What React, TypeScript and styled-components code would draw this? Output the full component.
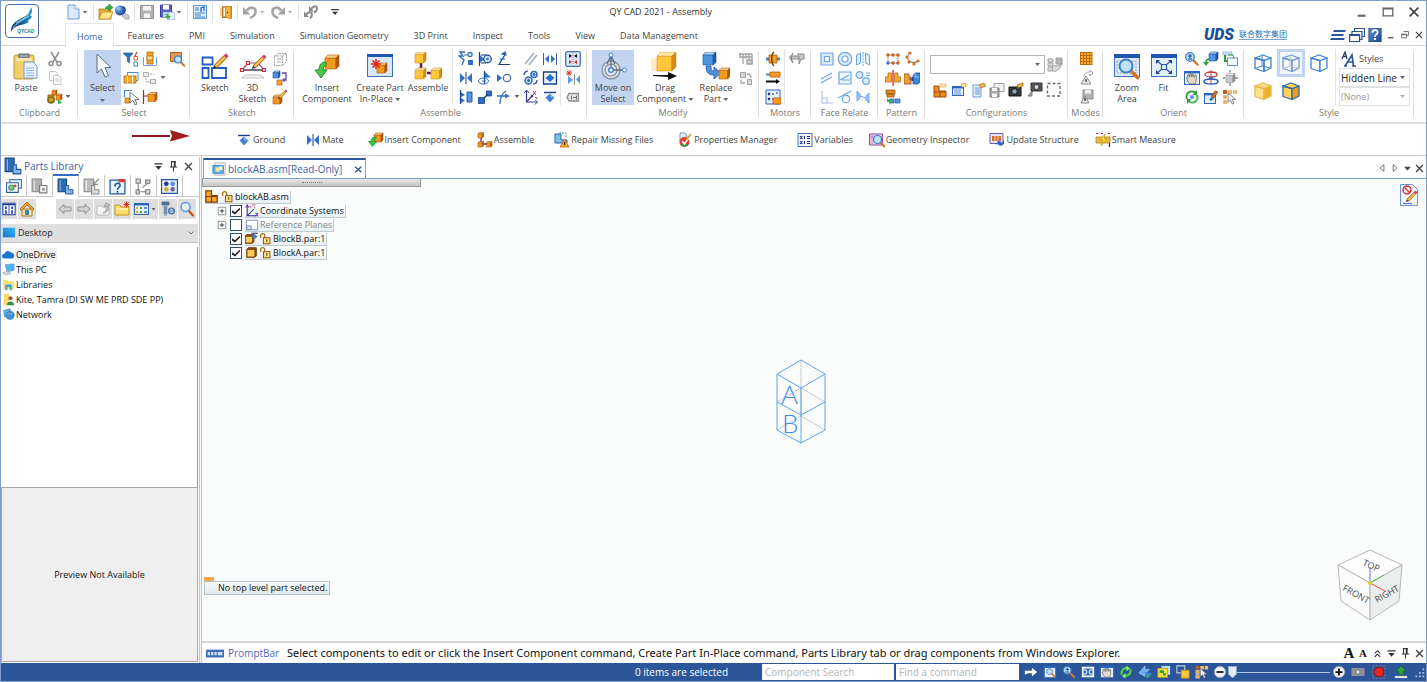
import React from 'react';
import styled, { createGlobalStyle, css } from 'styled-components';

const c = {
  blue: '#2b579a',
  mid: '#2f6fc4',
  line: '#d4d4d4',
  text: '#444444',
  soft: '#7a7a7a',
  edge: '#7f9ccc',
  pick: '#c3d4f0',
};

const Global = createGlobalStyle`
  * { box-sizing: border-box; }
  body { margin: 0; background: #fff; }
  body, button, input, select { font-family: 'Open Sans', 'Noto Sans CJK SC', sans-serif; font-size: 9px; line-height: 12px; color: ${c.text}; }
  button { border: 0; padding: 0; background: none; cursor: pointer; }
  svg { display: block; flex: none; }
  ul { list-style: none; margin: 0; padding: 0; }
`;

/* ---------- drawing helpers ---------- */

type Tone = 'o' | 'b' | 'y' | 'g' | 'l';
const tones: Record<Tone, [string, string, string]> = {
  o: ['#f39a1e', '#fcd27c', '#b0560c'],
  b: ['#4f94e4', '#b4d6fa', '#1c559f'],
  y: ['#ffc83c', '#ffe9a6', '#d58a12'],
  g: ['#c9c9c9', '#eeeeee', '#8c8c8c'],
  l: ['#d9e9fb', '#f4f9ff', '#86b2e6'],
};

const Blk = ({ x, y, s, k = 'o' }: { x: number; y: number; s: number; k?: Tone }) => {
  const d = s * 0.22;
  const f = s - d;
  const [front, top, side] = tones[k];
  return (
    <g stroke={side} strokeWidth={0.6} strokeLinejoin="round">
      <path d={`M${x} ${y + d}h${f}v${f}h${-f}z`} fill={front} />
      <path d={`M${x} ${y + d}l${d} ${-d}h${f}l${-d} ${d}z`} fill={top} />
      <path d={`M${x + f} ${y + d}l${d} ${-d}v${f}l${-d} ${d}z`} fill={side} />
    </g>
  );
};

const Mag = ({ x, y, r }: { x: number; y: number; r: number }) => (
  <g>
    <path d={`M${x + r * 0.8} ${y + r * 0.8}l${r} ${r}`} stroke="#d0762a" strokeWidth={r * 0.55} strokeLinecap="round" />
    <circle cx={x} cy={y} r={r} fill="#bfe2fb" stroke="#3b7fc6" strokeWidth={r * 0.3} />
  </g>
);

const Pencil = ({ x, y, l }: { x: number; y: number; l: number }) => (
  <g strokeLinecap="butt">
    <path d={`M${x + l * 0.15} ${y - l * 0.15}L${x + l * 0.8} ${y - l * 0.8}`} stroke="#8a5a10" strokeWidth={l * 0.28} />
    <path d={`M${x + l * 0.15} ${y - l * 0.15}L${x + l * 0.8} ${y - l * 0.8}`} stroke="#f5c04a" strokeWidth={l * 0.18} />
    <path d={`M${x + l * 0.8} ${y - l * 0.8}L${x + l * 0.95} ${y - l * 0.95}`} stroke="#d6357f" strokeWidth={l * 0.26} />
    <path d={`M${x} ${y}l${l * 0.08} ${-l * 0.25} ${l * 0.17} ${l * 0.17}z`} fill="#333" />
  </g>
);

const Win = ({ x = 1, y = 2, w = 14, h = 12 }: { x?: number; y?: number; w?: number; h?: number }) => (
  <g>
    <rect x={x + 0.5} y={y + 0.5} width={w - 1} height={h - 1} fill="#e6f0fc" stroke="#2f66b8" />
    <rect x={x} y={y} width={w} height={2.4} fill="#2a66c0" />
  </g>
);

const Burst = ({ x, y, r }: { x: number; y: number; r: number }) => (
  <path
    d={`M${x - r} ${y}h${2 * r}M${x} ${y - r}v${2 * r}M${x - r * 0.7} ${y - r * 0.7}l${r * 1.4} ${r * 1.4}M${x + r * 0.7} ${y - r * 0.7}l${-r * 1.4} ${r * 1.4}`}
    stroke="#e02a1c"
    strokeWidth={r * 0.32}
  />
);

const Arrow = ({ fill = '#f6f9fd', stroke = '#4b5560' }: { fill?: string; stroke?: string }) => (
  <path d="M0 0v11l3-2.6 2 4.6 2-1-2-4.400h4z" fill={fill} stroke={stroke} strokeWidth={0.8} />
);

/* ---------- 16 x 16 icons ---------- */

const icons: Record<string, React.ReactNode> = {
  newDoc: (
    <g>
      <path d="M3 1h7l4 4v10H3z" fill="#dbeafb" stroke="#6f9bd4" />
      <path d="M10 1v4h4" fill="#fff" stroke="#6f9bd4" strokeWidth={0.8} />
    </g>
  ),
  open: (
    <g>
      <path d="M1 5h5l1 1h6v9H1z" fill="#e8b73a" stroke="#a87a14" strokeWidth={0.8} />
      <path d="M1 15l3-7h11l-3 7z" fill="#ffe48c" stroke="#b98b1c" strokeWidth={0.8} />
      <path d="M7 5c1-3 3-3 4-3V0l4 3.500L11 7V5c-1 0-3 0-4 0z" fill="#35b045" stroke="#1d7a2c" strokeWidth={0.6} />
    </g>
  ),
  sphere: (
    <g>
      <circle cx={6} cy={6.5} r={5} fill="url(#ball)" />
      <path d="M8 3c4 0 4 5 1 6" fill="none" stroke="#1c4f96" strokeWidth={1.5} />
      <path d="M8 12l3-3 4 3v3h-4z" fill="#c8ccd4" stroke="#868c98" strokeWidth={0.7} />
    </g>
  ),
  saveGrey: (
    <g>
      <path d="M1.500 1.500h13v13h-13z" fill="#b4b4b4" stroke="#929292" />
      <path d="M4 2h8v4.500H4zM5 9.500h6V14H5z" fill="#f4f4f4" />
    </g>
  ),
  saveAll: (
    <g>
      <path d="M1.500 1h11v12h-11z" fill="#5a5fc0" stroke="#3a3f9c" />
      <path d="M4 1h6v4.500H4z" fill="#fff" />
      <path d="M4 8h6v5H4z" fill="#cfd4f4" />
      <path d="M9 8h5l2 2v6H9z" fill="#eaf2fc" stroke="#6c94cc" strokeWidth={0.7} />
      <path d="M5 10c4 0 5 0 5 2h2l-3 3.500L6 12h2c0-1-2-1-3-2z" fill="#35b045" />
    </g>
  ),
  sheet: (
    <g>
      <path d="M1.500 1.500h13v13h-13z" fill="#e4effc" stroke="#5e94d8" />
      <path d="M3 4h4M3 6h4M3 9h10M3 11h6M3 13h10" stroke="#3f7fce" />
      <path d="M9 8V4l3-1v4" fill="none" stroke="#2a66c0" strokeWidth={1.3} />
    </g>
  ),
  door: (
    <g>
      <path d="M5 2h9v11H5z" fill="#fff" stroke="#b0731a" strokeWidth={1.5} />
      <path d="M8 1.500l6 0V15L8 13z" fill="#f4b73c" stroke="#b0731a" strokeWidth={0.7} />
      <path d="M2 3h2v9H2z" fill="#e2cba8" />
      <circle cx={10} cy={8} r={0.8} fill="#6b4508" />
    </g>
  ),
  undo: (
    <g>
      <path d="M5 6.500C8 2 14 3 13.500 8c0 3-3 5-5.500 6" fill="none" stroke="#a4a4a4" strokeWidth={2.600} />
      <path d="M1 3v7.500h7.500z" fill="#a4a4a4" />
    </g>
  ),
  redo: (
    <g>
      <path d="M11 6.500C8 2 2 3 2.500 8c0 3 3 5 5.500 6" fill="none" stroke="#a4a4a4" strokeWidth={2.600} />
      <path d="M15 3v7.500H7.500z" fill="#a4a4a4" />
    </g>
  ),
  relink: (
    <g fill="none" stroke="#8c8c8c" strokeWidth={2}>
      <path d="M8 6c1-4 6-5 6-1.500 0 2-1 3-3 4" />
      <path d="M3 11c1-3 6-4 6-.500 0 2-1 3-2 4" />
      <path d="M6 2v5.500h5zM1 7.500V13h5z" fill="#8c8c8c" stroke="none" />
    </g>
  ),
  cut: (
    <g fill="none" stroke="#8e8e8e" strokeWidth={1.5}>
      <path d="M4 1l6 10M12 1L6 11" />
      <circle cx={4} cy={12.500} r={2} />
      <circle cx={12} cy={12.500} r={2} />
    </g>
  ),
  copy: (
    <g fill="#fbfbfb" stroke="#c3c3c3">
      <path d="M2.500 1.500h6l2 2v7h-8z" />
      <path d="M6.500 5.500h5l2.500 2.500v6.500H6.500zM8 9h4M8 11h4" />
    </g>
  ),
  truck: (
    <g>
      <Blk x={5} y={1} s={5} />
      <Blk x={9} y={5} s={6} />
      <path d="M1 6h6v7H1z" fill="#d9a21e" stroke="#7a4b0c" strokeWidth={0.8} />
      <circle cx={4} cy={11} r={3} fill="none" stroke="#7d6b1c" strokeWidth={1.5} />
      <path d="M11 10l4 4-4 1z" fill="#35b045" />
    </g>
  ),
  filter: (
    <g>
      <path d="M0 2h10L6.500 6.500V12l-2-1.500V6.500z" fill="#2f6fc4" stroke="#1d4f98" strokeWidth={0.6} />
      <path d="M14 1l-2 4" stroke="#d83a2a" strokeWidth={1.2} />
      <path d="M11 5.500h3.500v3.500H11z" fill="#fff" stroke="#e0602a" />
      <path d="M11 11h3.500v4H11z" fill="#fff" stroke="#2f8fd4" />
    </g>
  ),
  selBox: (
    <g>
      <path d="M1.500 6v8.500h13V6" fill="none" stroke="#6fa0e0" />
      <path d="M5 1h6v12H5z" fill="#f6a52c" stroke="#b0660e" strokeWidth={0.8} />
      <path d="M5 5h6v4H5z" fill="#ffe08a" stroke="#b0660e" strokeWidth={0.8} />
    </g>
  ),
  findPart: (
    <g>
      <path d="M1.500 1.500h11v9h-11z" fill="#dc9a5c" stroke="#a8612a" />
      <Mag x={9} y={8.500} r={3.500} />
    </g>
  ),
  selRect: (
    <g>
      <path d="M4 2.500h11v8h-2M4.500 2.500V6" fill="none" stroke="#4a8ee0" />
      <path d="M1 6h12v7H1z" fill="#f7a830" stroke="#a85c0c" strokeWidth={0.8} />
      <path d="M4.500 6v7M9.500 6v7" stroke="#fff3c8" />
    </g>
  ),
  selGrey: (
    <g fill="#ececec" stroke="#ababab">
      <path d="M1.500 2.500h5v4h-5zM8.500 9.500h5v4h-5z" />
      <path d="M4 8v4h4M8 4h4" strokeDasharray="2 1" />
    </g>
  ),
  selCursor: (
    <g>
      <path d="M1.500 8V1.500H9" fill="none" stroke="#3f86dc" strokeWidth={1.2} />
      <path d="M2 9h5v5H2z" fill="#f7a830" stroke="#a85c0c" strokeWidth={0.7} />
      <g transform="translate(7 3)"><Arrow /></g>
    </g>
  ),
  selSide: (
    <g>
      <path d="M1.500 1v14M2 7h5" stroke="#b0212a" strokeWidth={1.2} />
      <Blk x={6} y={3.500} s={9} />
    </g>
  ),
  refPlane: (
    <g fill="none" stroke="#a4a4a4">
      <path d="M2.500 5l4-2.500h8v8l-4 4h-8zM2.500 5h8l4-2.500M10.500 5v9" strokeDasharray="2 0.600" />
      <path d="M5 8h4M5 11h4" />
    </g>
  ),
  copySketch: (
    <g>
      <Blk x={1} y={1} s={7} k="b" />
      <path d="M10 3h4v7h-3" fill="none" stroke="#6a3f9c" strokeWidth={1.3} />
      <path d="M12.500 7.500L10 10l2.500 2.500z" fill="#6a3f9c" />
      <path d="M5 10h5v5H5z" fill="#f7a830" stroke="#a85c0c" strokeWidth={0.7} />
    </g>
  ),
  editPart: (
    <g>
      <Blk x={1} y={6} s={9} />
      <Pencil x={6} y={10} l={9} />
    </g>
  ),
  flash: (
    <g>
      <path d="M7 1H2l3 4H1l5 4-2 5" fill="none" stroke="#2f6fc4" strokeWidth={1.3} />
      <circle cx={12} cy={3.500} r={2.200} fill="#cfe2fa" stroke="#2f6fc4" strokeWidth={1.2} />
      <path d="M10 9h5v5h-5z" fill="#2f6fc4" />
      <path d="M6 4h3" stroke="#2f6fc4" />
    </g>
  ),
  mate: (
    <g fill="#2f6fc4">
      <path d="M2 3l5 5-5 5zM14 3L9 8l5 5z" />
      <path d="M7.500 2h1v12h-1z" fill="#15418a" />
    </g>
  ),
  mateSoft: (
    <g fill="#5b98e2">
      <path d="M3 6l5 4-5 4zM15 5l-4 4.500 4 4.500z" />
      <path d="M9 4h1v11H9z" fill="#888" />
      <Burst x={4} y={3} r={3} />
    </g>
  ),
  planar: (
    <g>
      <path d="M2.500 1v14" stroke="#15418a" strokeWidth={1.2} />
      <path d="M3 3l4 3-4 2zM3 9l4 2.500L3 14z" fill="#2f6fc4" />
      <path d="M9 3h5v10H9z" fill="#5b98e2" stroke="#15418a" strokeWidth={0.8} />
    </g>
  ),
  axial: (
    <g>
      <path d="M2.500 1v14M4 4h5M4 12h5" stroke="#15418a" strokeWidth={1.2} />
      <path d="M3 4l4 4-4 4z" fill="#2f6fc4" />
      <circle cx={10.500} cy={8} r={3.800} fill="#cfe2fa" stroke="#15418a" strokeWidth={1.2} />
      <circle cx={10.500} cy={8} r={1.300} fill="#2f6fc4" />
    </g>
  ),
  insertRel: (
    <g>
      <path d="M7.500 1v13" stroke="#15418a" strokeWidth={1.2} />
      <path d="M8 2l6 5.500H8z" fill="#2f6fc4" />
      <ellipse cx={6.500} cy={11} rx={5} ry={3} fill="none" stroke="#2f6fc4" />
      <path d="M5 11h4" stroke="#2f6fc4" />
    </g>
  ),
  connect: (
    <g fill="#2f6fc4" stroke="#15418a" strokeWidth={0.8}>
      <path d="M1.500 8.500h6v6h-6zM9.500 2h5v5h-5z" />
      <path d="M7 9l4-4" strokeWidth={1.5} />
    </g>
  ),
  angle: (
    <g fill="none" stroke="#2f6fc4" strokeWidth={1.2}>
      <path d="M14 13.500H3L10 2" stroke="#15418a" />
      <path d="M9 1L6 3l4 1z" fill="#15418a" />
      <path d="M4 8h5" />
    </g>
  ),
  tangent: (
    <g>
      <path d="M1 4l5 4-5 4z" fill="#2f6fc4" />
      <circle cx={11} cy={8} r={3.700} fill="#fff" stroke="#4a6fae" strokeWidth={1.2} />
    </g>
  ),
  path: (
    <g fill="none" stroke="#2f6fc4" strokeWidth={1.3}>
      <path d="M1 7h11M4 15c0-6 1-10 6-13" />
      <path d="M14 7L9 4.500v5z" fill="#2f6fc4" stroke="none" />
    </g>
  ),
  parallel: <path d="M2 13L11 2M6 14L14 4" stroke="#9aa9c4" strokeWidth={1.3} />,
  gears: (
    <g fill="#dce9fb" stroke="#2f6fc4">
      <circle cx={5.500} cy={10.500} r={3.500} strokeWidth={1.600} />
      <circle cx={5.500} cy={10.500} r={1.200} fill="#2f6fc4" />
      <circle cx={11} cy={4.500} r={3} strokeWidth={1.600} />
      <circle cx={11} cy={4.500} r={1} fill="#2f6fc4" />
      <path d="M10 14c3 0 4-2 4-4M1 5c0-2 2-4 4-4" strokeWidth={1.2} stroke="#15418a" fill="none" />
    </g>
  ),
  coord: (
    <g fill="none" stroke="#3a3a9c">
      <path d="M3.500 2v11H14M3.500 13L9 7" strokeWidth={1.2} />
      <path d="M1 4l2.500-3L6 4M12 10.500l2.500 2.500-2.500 2.500" />
      <path d="M10 2l3 4M13 2l-3 4M12 8l3 2" stroke="#a8327c" />
      <circle cx={9} cy={7} r={1} fill="#3a3a9c" />
    </g>
  ),
  center: (
    <g fill="#2f6fc4">
      <path d="M7 4v8L3 8zM9 4v8l4-4z" />
      <path d="M1 2h1v12H1zM14 2h1v12h-1z" fill="#4a5a9c" />
    </g>
  ),
  rigid: (
    <g>
      <path d="M1.500 2h13v12h-13z" fill="#eef4fd" stroke="#15418a" strokeWidth={1.3} />
      <path d="M8 4l4.500 4L8 12 3.500 8z" fill="#2f6fc4" />
    </g>
  ),
  ground: (
    <g>
      <path d="M2 3.500h12" stroke="#15418a" strokeWidth={1.4} />
      <path d="M8 4.500l4.500 4L8 13.500l-4.500-5z" fill="#3f7fdc" />
      <path d="M8 5l4 3.500H8z" fill="#86b4f2" />
    </g>
  ),
  toggle: (
    <g>
      <rect x={0.700} y={0.700} width={14.600} height={14.600} rx={1.500} fill="#dce9fb" stroke="#3f72c0" strokeWidth={1.3} />
      <path d="M4 3l3 2-3 2zM12 3L9 5l3 2z" fill="#111" />
      <path d="M4 9l3 2-3 2zM12 9l-3 2 3 2z" fill="#e0281c" />
      <path d="M8 2v12" stroke="#c84a4a" strokeWidth={0.8} strokeDasharray="1 1" />
    </g>
  ),
  capsule: (
    <g fill="none" stroke="#8c8c8c" strokeWidth={1.3}>
      <path d="M4 4.500h9.500v7.500H4l-2-3.500z" fill="#e4e4e4" />
      <path d="M6.500 6.500v4M8 8.500h3M11.500 6.500v4" stroke="#6c6c6c" strokeWidth={1} />
    </g>
  ),
  moveGrey: (
    <g fill="none" stroke="#a2a2a2" strokeWidth={1.3}>
      <path d="M1 3h13M2 6h12M5 3v10M8 3v5M11 3v10M2 3v4M14 3v10" />
      <path d="M9 9h5v4H9z" fill="#d0d0d0" />
    </g>
  ),
  replaceGrey: (
    <g fill="#d8d8d8" stroke="#a2a2a2">
      <path d="M2.500 2.500h5v5h-5zM9.500 9.500h4v5h-4z" />
      <path d="M9 4c3 0 4 1 4 4M3 10v3h4" fill="none" strokeWidth={1.3} />
    </g>
  ),
  motorRot: (
    <g>
      <path d="M1 6.500h14v3H1z" fill="#4f82c4" />
      <path d="M4 4h8v8H4z" fill="#f59d22" stroke="#a85c0c" strokeWidth={0.8} />
      <path d="M9 1C6 3 6 13 9 15" fill="none" stroke="#6a3c10" strokeWidth={1.4} />
    </g>
  ),
  motorLin: (
    <g>
      <path d="M1 3.500h5v2H1z" fill="#4f82c4" />
      <path d="M5 2h10v5H5z" fill="#f59d22" stroke="#a85c0c" strokeWidth={0.8} />
      <path d="M1 10.500h10V9l4 2.500-4 2.500v-1.500H1z" fill="#111" />
    </g>
  ),
  motorVar: (
    <g>
      <path d="M1 1h14v14H1z" fill="#e6effc" stroke="#2f66b8" />
      <path d="M3 4l2 2M5 4L3 6M7 5h2M11 4h2M3 9l2 2M5 9l-2 2M7 10h1" stroke="#1c2c6c" strokeWidth={1.2} />
      <path d="M8 9h8v6H8z" fill="#f59d22" stroke="#a85c0c" strokeWidth={0.8} />
    </g>
  ),
  motorSim: (
    <g fill="#c9c9c9" stroke="#888">
      <path d="M1 5h9v3H1zM8 3h7v5h-3l-2 5V8" />
      <path d="M4 2c-2 3-2 7 0 10" fill="none" strokeWidth={1.3} />
    </g>
  ),
  concentricSq: (
    <g fill="#dcecfd" stroke="#6ea6e8" strokeWidth={1.2}>
      <path d="M2 2h12v12H2z" />
      <path d="M5.500 5.500h5v5h-5z" fill="#fff" />
    </g>
  ),
  concentric: (
    <g fill="#dcecfd" stroke="#6ea6e8" strokeWidth={1.2}>
      <circle cx={8} cy={8} r={6.700} />
      <circle cx={8} cy={8} r={3} fill="#fff" />
    </g>
  ),
  symmetric: (
    <g fill="#dcecfd" stroke="#6ea6e8">
      <path d="M1.500 4l4-2v10l-4 2zM14.500 4l-4-2v10l4 2z" />
      <path d="M8 1v14" strokeDasharray="2 1" />
    </g>
  ),
  parallelSoft: <path d="M2 9l11-6M2 13l11-6" stroke="#6ea6e8" strokeWidth={1.3} />,
  offset: (
    <g fill="none" stroke="#6ea6e8" strokeWidth={1.2}>
      <path d="M2 2h12v12H2z" fill="#eef6fe" />
      <path d="M3 10l9-5M5 10h8" />
    </g>
  ),
  equal: (
    <g fill="#dcecfd" stroke="#6ea6e8" strokeWidth={1.2}>
      <circle cx={4.500} cy={5} r={3.300} />
      <circle cx={11} cy={11} r={3.300} />
      <path d="M11 3h4M11 5.500h4" />
    </g>
  ),
  perpend: <path d="M3 2v12h11M3 9h5v5" fill="none" stroke="#a9c4e6" strokeWidth={1.2} />,
  tangentSoft: (
    <g fill="none" stroke="#6ea6e8" strokeWidth={1.2}>
      <circle cx={9} cy={10} r={3.700} />
      <path d="M1 9l13-7" />
    </g>
  ),
  mirrorSoft: (
    <g fill="#9cc6f2" stroke="#6ea6e8">
      <path d="M2 2v10l3-3V5zM14 4v10l-3-3V7z" />
      <path d="M5 7l6 2" />
    </g>
  ),
  rectPattern: (
    <g>
      <path d="M3 4h10M3 12h10M3 4v8M13 4v8" stroke="#8c5a3c" strokeDasharray="1.500 1" />
      {[3, 8, 13].map((x) => <circle key={x} cx={x} cy={4} r={1.700} fill="#c4601c" />)}
      {[3, 8, 13].map((x) => <circle key={x} cx={x} cy={12} r={1.700} fill={x === 3 ? '#3f6fc4' : '#c4601c'} />)}
    </g>
  ),
  curvePattern: (
    <g>
      <path d="M6 2C1 6 4 13 13 11" fill="none" stroke="#8c5a3c" />
      {[[6, 2], [3, 6], [5, 11], [10, 13], [14, 10]].map(([x, y]) => <circle key={x} cx={x} cy={y} r={1.600} fill="#d0701c" />)}
    </g>
  ),
  mirror: (
    <g>
      <path d="M0 12V7h3V3h3.500v9zM16 12V7h-3V3H9.500v9z" fill="#f5a83a" stroke="#b0600e" strokeWidth={0.7} />
      <path d="M8 0v16" stroke="#e02a1c" strokeWidth={1.3} />
    </g>
  ),
  clonePart: (
    <g>
      <path d="M0 4h5v3h2v7H0z" fill="#f0a03a" stroke="#8c4a0c" strokeWidth={0.8} />
      <path d="M5 9h4M8 7l2 2-2 2z" fill="#3a3a6c" stroke="#3a3a6c" strokeWidth={0.8} />
      <path d="M9 6l2-3h5v9l-2 2H9z" fill="#3f86dc" stroke="#1c4f96" strokeWidth={0.8} />
      <path d="M11 3v4h4" stroke="#a8d0f8" strokeWidth={0.8} fill="none" />
    </g>
  ),
  duplicate: (
    <g>
      <path d="M1 1h9v4H1zM2 5h7v3H2z" fill="#e08a22" stroke="#8c4a0c" strokeWidth={0.7} />
      <path d="M5 10h4v4H5zM10 10h5v4h-5z" fill="#5b98e2" stroke="#1c559f" strokeWidth={0.7} />
      <path d="M2 9v4h2v2l3-3-3-2.500V11" fill="#35b045" />
    </g>
  ),
  cfgPart: (
    <g>
      <path d="M2 4h5v5h7v6H2z" fill="#f08a1c" stroke="#9c4a0c" />
      <path d="M2 10h12M8 10v5" stroke="#9c4a0c" />
      <path d="M8 2h6v3H8z" fill="#ffe9a8" stroke="#c8a04a" strokeWidth={0.6} />
    </g>
  ),
  cfgList: (
    <g>
      <Win x={1} y={4} w={12} h={10} />
      <path d="M3 8h7M3 10h7M3 12h7" stroke="#5b98e2" />
      <path d="M10 2l5-1v4l-4 0z" fill="#ffe08a" stroke="#c89a3c" strokeWidth={0.6} />
    </g>
  ),
  cfgDoc: (
    <g>
      <path d="M3 3h8v12H3z" fill="#e8f2fd" stroke="#6c9cd8" />
      <path d="M5 6h5M5 8h5M5 10h5M5 12h5" stroke="#5b98e2" />
      <path d="M9 3l5-2 2 3-5 2z" fill="#f0b44a" stroke="#a86c1c" strokeWidth={0.7} />
    </g>
  ),
  cfgSave: (
    <g>
      <path d="M5 1.500h10v8H5z" fill="#f4f4f4" stroke="#a0a0a0" />
      <path d="M1 6h9v9H1z" fill="#a8a8a8" stroke="#7c7c7c" />
      <path d="M3 6h5v3H3zM3 11.500h5V15H3z" fill="#f4f4f4" />
    </g>
  ),
  camera: (
    <g>
      <path d="M1 5h12v9H1z" fill="#3a3a3a" stroke="#111" />
      <circle cx={6.500} cy={9.500} r={2.800} fill="#8fa4b8" stroke="#111" />
      <path d="M9 3l6-2v3l-5 2z" fill="#f0b44a" stroke="#9c5c1c" strokeWidth={0.7} />
    </g>
  ),
  cameraGrey: (
    <g>
      <path d="M4 1h11v8H4z" fill="#585858" stroke="#333" />
      <circle cx={9.500} cy={5} r={2.500} fill="#d8d8d8" stroke="#333" />
      <path d="M5 9l-4 5h4z" fill="#a8a8a8" stroke="#777" />
    </g>
  ),
  dashed: <path d="M1.500 1.500h12.500v12.500h-12.500z" fill="none" stroke="#6c6c6c" strokeWidth={1.3} strokeDasharray="3 2" />,
  cfgApply: (
    <g fill="#dcdcdc" stroke="#a0a0a0">
      <path d="M1 2h5v3H1zM1 6h5v3H1zM1 10h5v4H1z" />
      <path d="M9 1h6v6H9z" fill="#b4b4b4" />
      <path d="M6 9h4l5-2-3 5-4 3-3-3z" />
    </g>
  ),
  gridMode: (
    <g>
      <path d="M2 1h12v13H2z" fill="#ffb22c" />
      <path d="M2 1.500h12M2 4.500h12M2 7.500h12M2 10.500h12M2 13.500h12M2.500 1v13M5.500 1v13M8.500 1v13M11.500 1v13M14 1v13" stroke="#b4640c" strokeWidth={0.9} />
    </g>
  ),
  warnArrow: (
    <g>
      <path d="M3 14l5-8 5 8z" fill="#e8e8e8" stroke="#8c8c8c" />
      <path d="M8 9v3" stroke="#333" strokeWidth={1.3} />
      <path d="M6 6c1-4 4-4 6-4V0l3 3-3 3V4" fill="none" stroke="#a0a0a0" />
    </g>
  ),
  warnSave: (
    <g>
      <path d="M5 1h10v9H5z" fill="#b4b4b4" stroke="#8a8a8a" />
      <path d="M7 1h6v3.500H7z" fill="#f0f0f0" />
      <path d="M3 14l4-7 4 7z" fill="#e8e8e8" stroke="#8c8c8c" />
      <path d="M7 9v3" stroke="#333" strokeWidth={1.3} />
    </g>
  ),
  zoom: (
    <g>
      <Mag x={6} y={6} r={4.300} />
      <path d="M4 5h4M6 3v4M4 8h4" stroke="#15418a" />
    </g>
  ),
  rotateCube: (
    <g>
      <Blk x={6} y={1} s={9} k="b" />
      <path d="M7 8c-3 0-4 1-4 4" fill="none" stroke="#2f9c3c" strokeWidth={1.6} />
      <path d="M0 11h6l-3 4z" fill="#2f9c3c" />
    </g>
  ),
  prevView: (
    <g>
      <path d="M5.500 7h10v7.500h-10z" fill="#f4f8fd" stroke="#6c8cb8" />
      <path d="M1 1h9v3H1z" fill="#cfe2fa" stroke="#8ca8cc" strokeWidth={0.7} />
      <path d="M3 4v6h3" fill="none" stroke="#2f9c3c" strokeWidth={2} />
      <path d="M6 4h5l1 3" fill="none" stroke="#2f9c3c" />
    </g>
  ),
  pan: (
    <g>
      <Win x={0} y={1} w={16} h={14} />
      <path d="M4 12l-1.500-4 1.500-.500L3.500 5 5 4.800l1 2.500L5.500 4l1.500-.300 1 3.300V4l1.500 0 .5 3.300L11 5l1.200.5v5L11 14H6z" fill="#e4d8c8" stroke="#5a5a5a" strokeWidth={0.7} />
    </g>
  ),
  orbit: (
    <g fill="none">
      <ellipse cx={8} cy={4.500} rx={6} ry={2.500} stroke="#b83a3a" strokeWidth={1.3} />
      <ellipse cx={8} cy={11.500} rx={7} ry={2.500} stroke="#2f5fb0" strokeWidth={1.5} />
      <path d="M8 0v13" stroke="#c84a4a" />
      <path d="M6 8h4" stroke="#2f5fb0" strokeWidth={1.5} />
    </g>
  ),
  cubeArrows: (
    <g>
      <Blk x={4} y={3.500} s={9} k="g" />
      <path d="M1 8h2M13 8h3M8 0v2.500M8 13v3" stroke="#6a87b8" strokeWidth={1.3} />
    </g>
  ),
  refresh: (
    <g fill="none" strokeWidth={2}>
      <path d="M3 10A5.300 5.300 0 0 1 12 4.500" stroke="#2f9c3c" />
      <path d="M13 6A5.300 5.300 0 0 1 4 11.500" stroke="#45b850" />
      <path d="M13 1v5H8.500zM3 15v-5h4.500z" fill="#2f9c3c" stroke="none" />
      <circle cx={8} cy={8} r={2} fill="#4f94e4" stroke="none" />
    </g>
  ),
  paintView: (
    <g>
      <Win x={1} y={4} w={12} h={11} />
      <path d="M12 2l3 1-4 6-3-1z" fill="#c8702a" stroke="#7c3f10" strokeWidth={0.6} />
      <path d="M8 8l3 1.500-3 2.500-2-1z" fill="#2f6fc4" />
    </g>
  ),
  treeCursor: (
    <g>
      <path d="M1 1h4v4H1z" fill="#b8601a" />
      <path d="M6 1h4v4H6zM11 1h4v4h-4z" fill="#f2b878" />
      <path d="M1 6h4v4H1zM1 11h4v4H1z" fill="#f0a050" stroke="#fff" strokeWidth={0.5} />
      <g transform="translate(6 4) scale(.85)"><Arrow /></g>
    </g>
  ),
  insertPart: (
    <g>
      <Blk x={6} y={1} s={9} />
      <path d="M8 5C4.500 5 3 7 3 9.500H0.500l4 5 4-5H6.500C6.500 8 7 7 8 7z" fill="#3fc63f" stroke="#1c7c24" strokeWidth={0.7} />
    </g>
  ),
  assemble: (
    <g>
      <path d="M4 5v5M6 12h4" fill="none" stroke="#5c2a7c" strokeWidth={1.3} />
      <Blk x={1} y={0.500} s={5.500} />
      <Blk x={1} y={9.500} s={5.500} />
      <Blk x={9.500} y={9.500} s={5.500} />
    </g>
  ),
  repair: (
    <g>
      <path d="M1 2h6v6h6v3H1z" fill="#7cc0ea" stroke="#2a66b0" />
      <path d="M5 1h7v5" fill="none" stroke="#4a8ee0" strokeDasharray="2 1" />
      <path d="M6 15l4.500-8 4.500 8z" fill="#ffa62c" stroke="#c85a14" strokeWidth={0.8} />
      <path d="M10.500 10v3" stroke="#222" strokeWidth={1.3} />
    </g>
  ),
  propManager: (
    <g>
      <path d="M3 1h5l2 3v6H3z" fill="#e8f0fb" stroke="#7c94b8" />
      <circle cx={7.500} cy={10} r={5} fill="#e23a2c" />
      <path d="M3 12a5 5 0 0 0 9 0z" fill="#2f9c3c" />
      <path d="M5 9l2.500 3L13 4" fill="none" stroke="#fff" strokeWidth={1.6} />
      <path d="M9 8l5-6" stroke="#c89a3c" strokeWidth={1.8} />
    </g>
  ),
  variables: (
    <g>
      <path d="M1 1.500h14v13H1z" fill="#f4f8fe" stroke="#3f72c0" />
      <path d="M3 4l2.500 3M5.500 4L3 7M7.500 4v3M10 4.500h3M10 6.500h3M3 9l2.500 3M5.500 9L3 12M7.500 9v3M10 9.500h3M10 11.500h3" stroke="#1c2c7c" strokeWidth={1.1} />
    </g>
  ),
  geomInspect: (
    <g>
      <path d="M0.500 2h13v11h-13z" fill="#f2cdea" stroke="#8c4a9c" />
      <path d="M3 2v11M0.500 5h13" stroke="#c88ac4" />
      <Mag x={8.500} y={7.500} r={4} />
    </g>
  ),
  updateStruct: (
    <g>
      <path d="M1 1.500h13v10H1z" fill="#ece4fa" stroke="#6c5ab0" />
      <path d="M3 4h9v5H3z" fill="#d0702a" />
      <path d="M6 4v5M9 4v5" stroke="#ffd8a8" />
      <path d="M15 9c1 5-5 6-6 3L7.500 13 9 8.500l4 2-1.500.8c1 1 2 0 2-2.300z" fill="#2f62b8" />
    </g>
  ),
  smartMeasure: (
    <g>
      <path d="M1 1.500h2M6 1.500h2M13 1.500h2" stroke="#c8283c" strokeWidth={1.2} />
      <path d="M1 5h14v6H1z" fill="#f0b84a" stroke="#b07c1c" strokeWidth={0.8} />
      <path d="M10 2L5 8h3l-2 6 6-7H9z" fill="#ffea3c" stroke="#a88414" strokeWidth={0.6} />
      <path d="M14.500 11v4" stroke="#1c3c9c" strokeWidth={1.3} />
    </g>
  ),
  partsLib: (
    <g>
      <path d="M1 1h8v12H1z" fill="#2f6cb4" stroke="#1c4a84" />
      <path d="M3 2v10" stroke="#8fb8e4" />
      <path d="M8 7h3v4h4v4H8z" fill="#7db4ea" stroke="#1c559f" strokeWidth={0.9} />
    </g>
  ),
  partsGrey: (
    <g>
      <path d="M1 1h9v12H1z" fill="#b0b0b0" stroke="#8c8c8c" />
      <path d="M3 2v10" stroke="#eee" />
      <path d="M8 7h7v7H8z" fill="#ececec" stroke="#7c7c7c" />
      <path d="M10.500 9.500h2.500v2.500h-2.500z" fill="#9c9c9c" />
    </g>
  ),
  partsCursor: (
    <g>
      <path d="M1 1h9v12H1z" fill="#bcbcbc" stroke="#8c8c8c" />
      <path d="M3 2v10" stroke="#fff" />
      <path d="M8 7h3v4h4v4H8z" fill="#dcdcdc" stroke="#8c8c8c" />
      <path d="M15 1l-5 5M10 2v4h4" fill="none" stroke="#8c8c8c" strokeWidth={1.3} />
    </g>
  ),
  images: (
    <g>
      <path d="M4.500 1.500h11v8h-11z" fill="#eaf2fc" stroke="#4a7cb8" />
      <path d="M1.500 4.500h11v9h-11z" fill="#fff" stroke="#2f5c98" />
      <circle cx={6} cy={9} r={2.500} fill="#7cc49c" stroke="#35a05a" />
      <circle cx={9.500} cy={7.500} r={1.300} fill="#e0483c" />
    </g>
  ),
  helpDoc: (
    <g>
      <path d="M1 2h14v13H1z" fill="#e9f2fd" stroke="#1f5a9e" strokeWidth={1.2} />
      <path d="M9 1h6v3H9z" fill="#e03c2c" />
      <path d="M5.500 8c0-4 5-4 5-1 0 2-2.500 1.500-2.500 4M8 12.300v1.500" fill="none" stroke="#1f5a9e" strokeWidth={1.5} />
    </g>
  ),
  treeGrey: (
    <g fill="#d8d8d8" stroke="#7c7c7c">
      <path d="M1 1h4v4H1zM10 2h4v3h-4zM1 11h3v4H1zM10 11h4v4h-4z" />
      <path d="M3 5v6M5 13h5M12 5L7 9" fill="none" />
    </g>
  ),
  palette: (
    <g>
      <path d="M0.500 1.500h15v13h-15z" fill="#eaf2fd" stroke="#1f5a9e" strokeWidth={1.2} />
      <circle cx={5} cy={5.500} r={2.200} fill="#1f3f8c" />
      <circle cx={11} cy={5.500} r={2.200} fill="#4f94e4" />
      <circle cx={5} cy={10.700} r={2.200} fill="#d8a83c" />
      <circle cx={11} cy={10.700} r={2.200} fill="#6a6a9c" />
    </g>
  ),
  columns: (
    <g>
      <path d="M1 1.500h14v13H1z" fill="#fff" stroke="#1f3f8c" strokeWidth={1.2} />
      <path d="M1 3h14" stroke="#1f3f8c" strokeWidth={1.5} />
      <path d="M8 2v12" stroke="#1f3f8c" />
      <path d="M4.500 5v3M4.500 9.500v4M11.500 5v3M11.500 9.500v4" stroke="#2a3ad0" strokeWidth={2} />
    </g>
  ),
  home: (
    <g>
      <path d="M3 8h10v7H3z" fill="#ffe7a4" stroke="#a87a1c" />
      <path d="M1 8l7-7 7 7-1.500 1.500L8 4 2.500 9.500z" fill="#f0a42c" stroke="#8c5a0c" strokeWidth={0.7} />
      <path d="M6 9h4v5H6z" fill="#3f7fce" />
    </g>
  ),
  back: <path d="M2 8l5-4.500V6h7v4H7v2.500z" fill="#d4d4d4" stroke="#8e8e8e" />,
  forward: <path d="M14 8L9 3.500V6H2v4h7v2.500z" fill="#d4d4d4" stroke="#8e8e8e" />,
  upFolder: (
    <g>
      <path d="M2 5h4l1 1h7v8H2z" fill="#f6f6f6" stroke="#bcbcbc" />
      <path d="M8 12c3-1 4-4 3-7L9 6l2-4 4 2-2 1c1 4-1 7-5 7z" fill="#c8c8c8" stroke="#8c8c8c" strokeWidth={0.7} />
    </g>
  ),
  newFolder: (
    <g>
      <path d="M1 4h5l1 2h8v8H1z" fill="#ffdc6c" stroke="#c8921c" />
      <path d="M2 8h12" stroke="#fff3c4" strokeWidth={1.5} />
      <Burst x={12.500} y={3.500} r={3} />
    </g>
  ),
  viewGrid: (
    <g>
      <Win x={0} y={2} w={15} h={12} />
      <path d="M2 7h2M2 11h2" stroke="#e8a43c" strokeWidth={2} />
      <path d="M6 7h2M6 11h2" stroke="#3f9c4a" strokeWidth={2} />
      <path d="M10 7h3M10 11h3" stroke="#4f94e4" strokeWidth={2} />
    </g>
  ),
  bolt: (
    <g>
      <path d="M2 1h7v3H2z" fill="#5a7c9c" stroke="#3c5c7c" strokeWidth={0.7} />
      <path d="M4 4h3v11H4z" fill="#9cb4cc" />
      <path d="M3.500 6h4M3.500 8h4M3.500 10h4M3.500 12h4" stroke="#3c5c7c" strokeWidth={0.8} />
      <circle cx={11.500} cy={10} r={2.800} fill="none" stroke="#4a7cac" strokeWidth={1.6} />
      <path d="M10 10h3" stroke="#4a7cac" />
    </g>
  ),
  search: (
    <g>
      <path d="M10 10l4 4.500" stroke="#c8541c" strokeWidth={2.300} strokeLinecap="round" />
      <circle cx={6.500} cy={6} r={4.500} fill="#e4f3fe" stroke="#5b98e2" strokeWidth={1.5} />
    </g>
  ),
  desktop: <path d="M1 2h14v11H1z" fill="url(#screen)" />,
  oneDrive: <path d="M3 13a3 3 0 0 1 0-6 4.500 4.500 0 0 1 8-1.500A4 4 0 0 1 13 13z" fill="#1a78d0" />,
  thisPc: (
    <g>
      <path d="M4 2l11-1v8l-9 2z" fill="#49b4f4" stroke="#7c98ac" strokeWidth={0.8} />
      <path d="M1 12l6-2 4 3-7 2z" fill="#d4dce4" stroke="#8c9cac" strokeWidth={0.7} />
    </g>
  ),
  libraries: (
    <g>
      <path d="M1 2h6l1 2h7v10H1z" fill="#ffdf7c" />
      <path d="M4 15V8h8v7H9.500v-4h-3v4z" fill="#35a4dc" />
    </g>
  ),
  user: (
    <g>
      <path d="M2 1h7v14H2z" fill="#ffd868" />
      <circle cx={10.500} cy={6.500} r={2.500} fill="#8c5a3c" />
      <path d="M6 15c0-6 9-6 9 0z" fill="#2f8c5a" />
    </g>
  ),
  network: (
    <g>
      <path d="M2 3l8-2v7l-7 3z" fill="#5ab8f0" stroke="#3c6c94" strokeWidth={0.7} />
      <circle cx={10} cy={9} r={5} fill="#3f8fd4" stroke="#24649c" strokeWidth={0.7} />
      <path d="M6 8c2-3 4 1 7-1" fill="none" stroke="#8ccaf4" strokeWidth={1.2} />
    </g>
  ),
  docTab: (
    <g>
      <path d="M3 1h12v14H3z" fill="#f4f4f4" stroke="#9c9c9c" strokeWidth={0.8} />
      <path d="M1 4h12v9H1z" fill="#4fb4f0" stroke="#2470b0" strokeWidth={0.8} />
      <path d="M4 6h5v5H4z" fill="#ffe08a" />
      <path d="M8 5h4v4H8z" fill="#fff2c0" />
    </g>
  ),
  asmRoot: (
    <g>
      <path d="M1 1h7v6h7v8H1z" fill="#f5a82a" stroke="#7c3c0c" strokeWidth={1.5} />
      <path d="M1 8h14M8 8v7" stroke="#7c3c0c" strokeWidth={1.5} />
    </g>
  ),
  lock: (
    <g>
      <path d="M2 7.500V4.500a2.400 2.400 0 0 1 5 0V8" fill="none" stroke="#a56a10" strokeWidth={1.500} />
      <rect x={5.500} y={7} width={8} height={7.500} fill="#ffe08a" stroke="#8a5208" strokeWidth={1.200} />
      <path d="M9.500 9v3" stroke="#5a3505" strokeWidth={1.3} />
    </g>
  ),
  part: (
    <g>
      <path d="M2 4l2-2h10v10l-2 2H2z" fill="#8c4a0c" stroke="#6c340c" />
      <path d="M3 5h8.500v8H3z" fill="#ffd05c" />
    </g>
  ),
  partGround: (
    <g>
      <path d="M0 5l2-2h9v9l-2 2H0z" fill="#8c4a0c" stroke="#6c340c" />
      <path d="M1 6h7.500v7H1z" fill="#ffd05c" />
      <path d="M8 1.500h8" stroke="#15418a" strokeWidth={1.3} />
      <path d="M12 2.500l3.500 3L12 9 8.500 5.500z" fill="#3f7fdc" />
    </g>
  ),
  plane: (
    <g fill="#fff" stroke="#6c84c4">
      <path d="M1.500 2.500h13v11h-13z" />
      <path d="M2 9h5v4H2z" fill="#dce4f8" />
    </g>
  ),
  triad: (
    <g fill="none" stroke="#2c2c9c" strokeWidth={1.2}>
      <path d="M2.500 2v11.500H13M2.500 13.500L10 6" />
      <path d="M.8 4l1.700-3L4.200 4M5 2l2 2M12 10l3 4M15 10l-3 4" stroke="#7c2c9c" />
      <path d="M8 1h4M10 3l2 2" stroke="#c83c6c" strokeWidth={0.9} />
    </g>
  ),
  promptBar: (
    <g>
      <path d="M0 5h16v7H0z" fill="#3f6fb4" />
      <path d="M1.500 7h2v3h-2zM4.500 7h2v3h-2zM7.500 7h2v3h-2zM10.500 7h4v3h-4z" fill="#d4e2f6" />
    </g>
  ),
  share: <path d="M1 6.500h8V3l6 5-6 5V9.500H4.500L1 11z" fill="#fff" />,
  sZoomArea: (
    <g>
      <Win x={1} y={1} w={14} h={14} />
      <Mag x={7.500} y={7.500} r={3.300} />
    </g>
  ),
  sFit: (
    <g>
      <path d="M1 2h14v12H1z" fill="#fff" />
      <path d="M3 4h10v8H3z" fill="#2f6fc4" />
      <path d="M4 5l3 2.500M12 5L9 7.500M4 11l3-2.500M12 11L9 8.500" stroke="#fff" strokeWidth={1.3} />
    </g>
  ),
  sSpin: (
    <g fill="none" stroke="#4fd03c" strokeWidth={2.600}>
      <path d="M3 11C2 7 5 3 9 3.500M13 5c1 4-2 8-6 7.500" />
      <path d="M8.500 0.500l4 3.500-4 3zM7.500 9l-4 3.500 4 3z" fill="#8cf07c" stroke="none" />
    </g>
  ),
  sLook: (
    <g>
      <path d="M1 9l7-8v4h5L8 10v3z" fill="#6cabf0" stroke="#cfe2fa" strokeWidth={0.6} />
      <path d="M8 8l7 1v3l-5 3z" fill="#3f86dc" />
      <path d="M9 11l5 1-3 3z" fill="#35b045" />
    </g>
  ),
  sYellow: (
    <g>
      <path d="M5 1h10v10H5z" fill="#bfe0fa" />
      <path d="M1 4h11v10H1z" fill="#f8e23c" stroke="#c8a414" />
      <path d="M3 6h5v3h2v3H7V9H3z" fill="#2f9c3c" />
    </g>
  ),
  sStyle: (
    <g>
      <path d="M1 1h9v8H1z" fill="none" stroke="#b8cce8" strokeWidth={1.3} />
      <path d="M6 6h9v9H6z" fill="#ffc83c" stroke="#d58a12" />
    </g>
  ),
  minus: (
    <g>
      <circle cx={8} cy={8} r={6.500} fill="#f2f2f2" stroke="#8c9cb8" />
      <path d="M4 8h8" stroke="#111" strokeWidth={2} />
    </g>
  ),
  plus: (
    <g>
      <circle cx={8} cy={8} r={6.500} fill="#f2f2f2" stroke="#8c9cb8" />
      <path d="M4 8h8M8 4v8" stroke="#111" strokeWidth={2} />
    </g>
  ),
  player: (
    <g>
      <path d="M1 4h14v8H1z" fill="#8e8e8e" stroke="#b0b0b0" strokeWidth={0.7} />
      <path d="M7 6l3 2-3 2z" fill="#fff" />
    </g>
  ),
  record: (
    <g>
      <path d="M1 1h14v14H1z" fill="none" stroke="#b87a7c" strokeDasharray="2 2" />
      <circle cx={8} cy={8} r={5.500} fill="#e0281c" stroke="#8c140c" />
    </g>
  ),
  upload: (
    <g>
      <path d="M8 1l6 6h-3.500v4h-5V7H2z" fill="#2fa03c" stroke="#14641c" strokeWidth={0.7} />
      <path d="M1 12.500h14v2.500H1z" fill="#e4e4dc" />
    </g>
  ),
  grip: (
    <g fill="#a9bfe0">
      {[[12, 4], [12, 8], [8, 8], [12, 12], [8, 12], [4, 12]].map(([x, y]) => <rect key={`${x}-${y}`} x={x} y={y} width={2} height={2} />)}
    </g>
  ),
  stripes: <path d="M4 3h12l-1 2H3zM2 7h12l-1 2H1zM1 11h14l-1 2H0z" fill="#2b579a" />,
  cascade: (
    <g fill="#fff" stroke="#2b4f94" strokeWidth={1.2}>
      <path d="M5.500 1.500h10v8h-10z" />
      <path d="M3 4.500h10v8H3z" />
      <path d="M0.600 7.500h10v7h-10zM.6 8.500h10" />
    </g>
  ),
  help: (
    <g>
      <path d="M1 0h14v16H1z" fill="url(#helpFill)" stroke="#24477c" />
      <path d="M5 5.500c0-4 6-4 6-.500 0 2.500-3 2-3 5M8 11.500v2.300" fill="none" stroke="#fff" strokeWidth={2} />
    </g>
  ),
  menuBar: <path d="M3 4h10v1.500H3zM4 7.500h8L8 12z" fill="#333" />,
  pin: <path d="M5 2h6M5.500 2v6M10 2v6M9 2v6M3.500 8.500h9M8 9v5" fill="none" stroke="#333" strokeWidth={1.3} />,
  close: <path d="M3 3l10 10M13 3L3 13" stroke="#444" strokeWidth={2} />,
  closeBlue: <path d="M2 3l11 10M13 3L2 13" stroke="#2b4f94" strokeWidth={2.200} />,
  minimize: <path d="M3 11h9v2.500H3z" fill="#666" />,
  maximize: <path d="M2.500 3.500h11v9h-11zM2.500 4.500h11" fill="none" stroke="#666" strokeWidth={1.5} />,
  restore: <path d="M5.500 2.500h8v6h-3M2.500 6.500h8v6h-8zM3 7.500h7" fill="none" stroke="#555" strokeWidth={1.3} />,
  chevUp: <path d="M4 8l4-4 4 4M4 13l4-4 4 4" fill="none" stroke="#222" strokeWidth={1.5} />,
  triLeft: <path d="M10.500 3.500v9L5.500 8z" fill="none" stroke="#666" strokeWidth={1.2} />,
  triRight: <path d="M5.500 3.500v9l5-4.500z" fill="none" stroke="#666" strokeWidth={1.2} />,
  triDown: <path d="M2 5h12l-6 6.500z" fill="#444" />,
  expand: (
    <g>
      <path d="M2 2h12v12H2z" fill="#fff" stroke="#6c7480" strokeWidth={1.200} />
      <path d="M4.500 8h7M8 4.500v7" stroke="#333" strokeWidth={1.5} />
    </g>
  ),
};

const Icon = ({ n, s = 16 }: { n: string; s?: number }) => (
  <svg width={s} height={s} viewBox="0 0 16 16" aria-hidden="true">{icons[n]}</svg>
);

/* ---------- 28 x 28 icons ---------- */

const bigIcons: Record<string, React.ReactNode> = {
  paste: (
    <g>
      <rect x={2} y={3} width={20} height={24} rx={2} fill="#f2cf6a" stroke="#b8963a" />
      <path d="M7 2h10v4H7z" fill="#9aa4b0" stroke="#5c6670" />
      <path d="M4 6h16v3H4z" fill="#fbe7a8" />
      <path d="M12 10h9l4 4v12H12z" fill="#eaf3fd" stroke="#6c9cd8" />
      <path d="M14 16h8M14 18.500h8M14 21h8M14 23.500h8" stroke="#8cb4e4" />
    </g>
  ),
  cursor: <path d="M8 2v19l4.500-4 3.500 8 3.500-1.500L16 15.500h6z" fill="#f3f6fa" stroke="#5c6c80" />,
  sketch: (
    <g>
      <path d="M1.500 5.500h10v7h-10zM1.500 16h6v10h-6zM11 16h14v10H11z" fill="#fff" stroke="#1f5fc4" strokeWidth={1.8} />
      <Pencil x={12} y={17} l={15} />
    </g>
  ),
  sketch3d: (
    <g>
      <path d="M3 18L9 11h10l6 7z" fill="none" stroke="#8c5a6c" strokeWidth={1.2} />
      <path d="M3 26h22l-4-3H7z" fill="#f4f4f4" stroke="#b4b4b4" strokeWidth={0.8} />
      <path d="M3 18h22" stroke="#3a4a6c" strokeWidth={1.2} />
      {[[3, 18], [9, 11], [25, 18]].map(([x, y]) => <path key={x} d={`M${x - 1.500} ${y - 1.500}h3v3h-3z`} fill="#fff" stroke="#d8283c" strokeWidth={1.2} />)}
      <Pencil x={13} y={17} l={14} />
    </g>
  ),
  insert: (
    <g>
      <Blk x={12} y={3} s={14} />
      <path d="M13 10c-5 0-7 3-7 8H2l6 8 6-8h-4c0-3 1-4 3-4z" fill="#4fc84a" stroke="#1f8c28" />
    </g>
  ),
  create: (
    <g>
      <rect x={1.500} y={2.500} width={25} height={22} fill="#d8e8fb" stroke="#3f72b8" />
      <path d="M1 2h26v3H1z" fill="#1f57b0" />
      <Blk x={11} y={11} s={10} />
      <Burst x={10} y={12} r={5} />
    </g>
  ),
  assembleBig: (
    <g>
      <path d="M7 11v6M13 21h6" stroke="#5c1c5c" strokeWidth={2.5} />
      <Blk x={1} y={0} s={11} k="y" />
      <Blk x={1} y={16} s={11} k="y" />
      <Blk x={17} y={16} s={11} k="y" />
    </g>
  ),
  moveSelect: (
    <g fill="none" stroke="#8c98a8">
      <circle cx={12} cy={18} r={9} fill="#e4e8ee" strokeWidth={1.5} />
      <circle cx={12} cy={18} r={6} strokeWidth={1.5} />
      <path d="M12 3v15h14M8 12l4-8 4 8" stroke="#5c6c80" strokeWidth={1.3} />
      <circle cx={12} cy={3} r={2} stroke="#3f82e0" fill="#fff" />
      <circle cx={12} cy={18} r={2.300} stroke="#3f82e0" fill="#fff" strokeWidth={1.5} />
      <circle cx={25.500} cy={18} r={2} stroke="#3f82e0" fill="#fff" />
    </g>
  ),
  drag: (
    <g>
      <path d="M0 6h8v13H0z" fill="#ffe6b0" opacity={0.7} />
      <Blk x={6} y={0} s={19} k="y" />
      <path d="M2 23h15v-3l9 4-9 4v-3L2 24z" fill="#111" />
    </g>
  ),
  replace: (
    <g>
      <Blk x={1} y={0} s={13} k="b" />
      <path d="M4 14c0 8 4 9 8 9v4l7-6-7-6v4c-2 0-3-1-3-5z" fill="#4f8fdc" stroke="#1c559f" strokeWidth={0.8} />
      <Blk x={17} y={16} s={11} />
    </g>
  ),
  zoomArea: (
    <g>
      <rect x={1.500} y={2.500} width={25} height={22} fill="#dceafb" stroke="#3f72b8" />
      <path d="M1 2h26v4H1z" fill="#1f57b0" />
      <path d="M4 9h19v12H4z" fill="none" stroke="#8ca4cc" strokeDasharray="2 1" />
      <Mag x={13} y={14} r={6.500} />
    </g>
  ),
  fit: (
    <g>
      <rect x={1.500} y={2.500} width={25} height={22} fill="#e4effc" stroke="#3f72b8" />
      <path d="M1 2h26v4H1z" fill="#1f57b0" />
      <path d="M11.500 12.500h5v5h-5zM11.500 12.500L7 9M16.500 12.500l4.500-3.500M11.500 17.500L7 21M16.500 17.500L21 21" fill="none" stroke="#2f57a0" strokeWidth={1.2} />
      <path d="M6 8h4L6 12zM22 8h-4l4 4zM6 22v-4l4 4zM22 22v-4l-4 4z" fill="#1f3f94" />
    </g>
  ),
};

const BigIcon = ({ n }: { n: string }) => (
  <svg width={28} height={28} viewBox="0 0 28 28" aria-hidden="true">{bigIcons[n]}</svg>
);

const WireCube = ({ fill, side, stroke, hidden, inner }: { fill: string; side: string; stroke: string; hidden?: string; inner?: boolean }) => (
  <svg width={20} height={20} viewBox="0 0 20 20" aria-hidden="true">
    <g strokeLinejoin="round" stroke={stroke} strokeWidth={1.3}>
      <path d="M2 5l9 2.500v11L2 15.500z" fill={fill} />
      <path d="M11 7.500L18 5v10l-7 3.500z" fill={side} />
      <path d="M2 5l8-3 8 3-7 2.500z" fill={fill} />
      {inner && <path d="M2 15.500l7-2.500 9 2M9 13V2.500" fill="none" stroke={hidden} strokeWidth={1} />}
    </g>
  </svg>
);

/* ---------- shared parts ---------- */

const Row = styled.div`display: flex; align-items: center;`;

const IconButton = styled.button<{ $w?: number; $h?: number }>`
  display: flex; align-items: center; justify-content: center; flex: none;
  width: ${(p) => p.$w ?? 16}px; height: ${(p) => p.$h ?? 16}px;
`;

const CaretShape = styled.span<{ $pale?: boolean }>`
  width: 5px; height: 3px; background: ${(p) => (p.$pale ? '#b0b0b0' : '#666')};
  clip-path: polygon(0 0, 100% 0, 50% 100%); display: inline-block; flex: none; vertical-align: middle;
`;

const Caret = ({ label, pale }: { label: string; pale?: boolean }) => (
  <IconButton $w={8} aria-label={label}><CaretShape $pale={pale} /></IconButton>
);

const Tool = ({ n, w, h, s }: { n: string; w?: number; h?: number; s?: number }) => (
  <IconButton $w={w} $h={h} aria-label={n}><Icon n={n} s={s} /></IconButton>
);

/* ---------- header ---------- */

const Shell = styled.div`
  min-height: 100vh; display: flex; flex-direction: column; overflow: hidden;
  border: 1px solid ${c.edge}; border-bottom: 0; background: #fff;
`;

const Header = styled.header`
  display: grid; grid-template-columns: 64px 1fr; grid-template-rows: 22px 23px;
  border-bottom: 1px solid ${c.line}; height: 45px;
`;

const AppButton = styled.button`
  grid-row: 1 / 3; align-self: start; margin: 3px 0 0 4px; width: 34px; height: 34px;
  border: 1px solid #4a6fb0; border-radius: 4px; background: #fff;
  display: flex; flex-direction: column; align-items: center; justify-content: center;
`;

const TitleRow = styled.div`
  display: grid; grid-template-columns: 40% auto 1fr; align-items: center;
`;
const QuickSep = styled.span`width: 1px; height: 18px; margin: 0 4px; background: #e2e2e2;`;
const Space = styled.span<{ $w: number }>`width: ${(p) => p.$w}px; flex: none;`;
const Title = styled.h1`margin: 0; font-size: 9px; font-weight: 400; color: #333;`;
const WindowControls = styled(Row)`justify-content: flex-end; gap: 10px; padding-right: 4px;`;

const TabRow = styled.div`display: flex; align-items: stretch;`;
const Tabs = styled.nav`display: flex; gap: 1px;`;
const Tab = styled.button<{ $on?: boolean }>`
  padding: 2px 12px 0; white-space: nowrap; border: 1px solid transparent; border-width: 1px 0 0;
  ${(p) => p.$on && css`color: #3a66ae; border-color: #e6e6e6; border-width: 1px 1px 0; padding: 2px 11px 0; margin-bottom: -1px; background: #fff;`}
`;
const Brand = styled.div`
  margin-left: auto; display: flex; align-items: center; gap: 5px; white-space: nowrap;
  b { font: italic 900 16px/20px 'Roboto', sans-serif; color: #17509a; }
  span { display: block; font-size: 8px; line-height: 10px; color: #2c6cb4; border-bottom: 1px solid #7ca4d0; }
`;
const MdiControls = styled(Row)`margin-left: 43px; gap: 3px; padding-right: 1px;`;

const Logo = () => (
  <svg width={28} height={28} viewBox="0 0 28 28" role="img" aria-label="QYCAD">
    <defs>
      <linearGradient id="feather" x1="0" y1="1" x2="1" y2="0">
        <stop offset="0" stopColor="#0d2f6c" />
        <stop offset="1" stopColor="#1fa8dc" />
      </linearGradient>
      <linearGradient id="helpFill" x1="0" y1="0" x2="1" y2="1">
        <stop offset="0" stopColor="#5c92d4" />
        <stop offset="1" stopColor="#1f4a8c" />
      </linearGradient>
      <linearGradient id="screen" x1="0" y1="1" x2="1" y2="0">
        <stop offset="0" stopColor="#1478d4" />
        <stop offset="1" stopColor="#35b4f4" />
      </linearGradient>
      <radialGradient id="ball" cx="0.350" cy="0.300" r="0.800">
        <stop offset="0" stopColor="#a4ccf4" />
        <stop offset="0.500" stopColor="#3f78c0" />
        <stop offset="1" stopColor="#183c7c" />
      </radialGradient>
    </defs>
    <path d="M3 25c0-8 4-10 9-13 6-3 10-6 11-12 2 3 1 6-1 9h2c-1 3-3 4-5 5h2c-2 3-5 3-8 4-5 1-8 3-10 7z" fill="url(#feather)" />
    <path d="M5 21c3-5 10-8 16-12M8 16c5-3 10-5 13-10" fill="none" stroke="#d8eef8" strokeWidth={0.7} />
    <text x={9} y={26} fontSize={5} fontWeight={700} fill="#2f8c7c">QYCAD</text>
  </svg>
);

const tabNames = ['Home', 'Features', 'PMI', 'Simulation', 'Simulation Geometry', '3D Print', 'Inspect', 'Tools', 'View', 'Data Management'];

const AppHeader = () => (
  <Header>
    <AppButton aria-label="Application menu"><Logo /></AppButton>
    <TitleRow>
      <Row>
        <Tool n="newDoc" /><Caret label="New options" /><QuickSep />
        <Tool n="open" /><Tool n="sphere" /><QuickSep />
        <Tool n="saveGrey" /><Space $w={4} /><Tool n="saveAll" /><Caret label="Save options" /><QuickSep />
        <Tool n="sheet" /><QuickSep /><Tool n="door" s={15} /><QuickSep />
        <Tool n="undo" /><Caret label="Undo list" pale /><Space $w={4} />
        <Tool n="redo" /><Caret label="Redo list" pale /><QuickSep />
        <Tool n="relink" /><Space $w={8} /><Tool n="menuBar" s={12} />
      </Row>
      <Title>QY CAD 2021 - Assembly</Title>
      <WindowControls>
        <Tool n="minimize" s={14} /><Tool n="maximize" s={14} /><Tool n="close" s={14} />
      </WindowControls>
    </TitleRow>
    <TabRow>
      <Tabs>{tabNames.map((t, i) => <Tab key={t} $on={i === 0}>{t}</Tab>)}</Tabs>
      <Brand><b>UDS</b><span>联合数字集团</span></Brand>
      <MdiControls>
        <Tool n="stripes" /><Tool n="cascade" /><Tool n="help" w={14} s={14} />
        <Tool n="minimize" w={11} s={10} /><Tool n="restore" w={11} s={10} /><Tool n="close" w={12} s={10} />
      </MdiControls>
    </TabRow>
  </Header>
);

/* ---------- ribbon ---------- */

const Ribbon = styled.section`
  display: flex; height: 78px; padding-top: 3px; border-bottom: 2px solid #dedede;
`;
const GroupBox = styled.div<{ $w: number }>`
  flex: none; width: ${(p) => p.$w}px; display: flex; flex-direction: column;
  background: linear-gradient(#dcdcdc, #dcdcdc) right 2px / 1px 66px no-repeat;
`;
const GroupBody = styled.div<{ $pad: number }>`display: flex; height: 57px; padding-left: ${(p) => p.$pad}px;`;
const GroupName = styled.div`text-align: center; color: ${c.soft}; line-height: 14px;`;

const Group = ({ name, w, pad, children }: { name: string; w: number; pad: number; children: React.ReactNode }) => (
  <GroupBox $w={w}>
    <GroupBody $pad={pad}>{children}</GroupBody>
    <GroupName>{name}</GroupName>
  </GroupBox>
);

const BigButton = styled.button<{ $w: number; $on?: boolean }>`
  flex: none; width: ${(p) => p.$w}px; height: 55px; margin-top: 1px; padding-top: 2px;
  display: flex; flex-direction: column; align-items: center; line-height: 11px;
  background: ${(p) => (p.$on ? c.pick : 'none')};
`;
const BigText = styled.span`margin-top: 2px; white-space: pre; text-align: center;`;

const UnderCaret = styled(CaretShape)`margin-top: 6px;`;

const Big = ({ n, w, label, on, caret, under }: { n: string; w: number; label: string; on?: boolean; caret?: boolean; under?: boolean }) => (
  <BigButton $w={w} $on={on}>
    <BigIcon n={n} />
    <BigText>{label}{caret && <> <CaretShape /></>}</BigText>
    {under && <UnderCaret />}
  </BigButton>
);

const ToolGrid = styled.div<{ $w: number }>`
  display: grid; grid-template-rows: repeat(3, 19px); grid-auto-flow: column; grid-auto-columns: ${(p) => p.$w}px;
  align-items: center; justify-items: center;
`;
const CaretColumn = styled.div<{ $at: number }>`
  width: 8px; display: grid; grid-template-rows: repeat(3, 19px); align-items: center;
  > * { grid-row: ${(p) => p.$at}; }
`;
const InnerSep = styled.span<{ $l?: number; $r?: number }>`
  width: 1px; height: 56px; background: #e4e4e4; flex: none;
  margin: 0 ${(p) => p.$r ?? 2}px 0 ${(p) => p.$l ?? 2}px;
`;
const Grid = ({ names, w = 19 }: { names: string[]; w?: number }) => (
  <ToolGrid $w={w}>{names.map((n) => <Tool key={n} n={n} />)}</ToolGrid>
);

const Picker = styled.label<{ $w: number; $h: number; $line?: string }>`
  display: grid; align-items: center; width: ${(p) => p.$w}px; height: ${(p) => p.$h}px; flex: none;
  border: 1px solid ${(p) => p.$line ?? '#e0e0e0'}; background: #fff;
  > * { grid-area: 1 / 1; }
  > span { justify-self: end; margin-right: 4px; pointer-events: none; }
  select { appearance: none; width: 100%; height: 100%; border: 0; padding: 0 1px; background: transparent; font-size: 10px; color: #222; }
  select:disabled { color: #999; opacity: 1; font-size: 9px; }
`;

const ConfigBody = styled.div`display: flex; flex-direction: column;`;
const ConfigRow = styled(Row)<{ $top: number }>`margin-top: ${(p) => p.$top}px;`;
const StyleCubes = styled.div`display: grid; grid-template: 28px 28px / repeat(3, 28px);`;
const CubeButton = styled.button<{ $on?: boolean }>`
  display: flex; align-items: center; justify-content: center;
  ${(p) => p.$on && css`border: 3px solid ${c.pick}; background: #f2f6fc;`}
`;
const StyleSide = styled.div`display: flex; flex-direction: column;`;
const StylesButton = styled.button`
  display: flex; align-items: center; gap: 3px; height: 19px; padding-left: 2px;
`;

const RibbonBar = () => (
  <Ribbon>
    <Group name="Clipboard" w={77} pad={6}>
      <Big n="paste" w={38} label="Paste" />
      <Grid names={['cut', 'copy', 'truck']} />
      <CaretColumn $at={3}><Caret label="Clipboard options" /></CaretColumn>
    </Group>
    <Group name="Select" w={112} pad={6}>
      <Big n="cursor" w={37} label="Select" on under />
      <Grid names={['filter', 'selRect', 'selCursor', 'selBox', 'selGrey', 'selSide']} />
      <CaretColumn $at={2}><Caret label="Select options" /></CaretColumn>
      <Grid names={['findPart']} />
    </Group>
    <Group name="Sketch" w={104} pad={5}>
      <Big n="sketch" w={40} label="Sketch" />
      <Big n="sketch3d" w={35} label={'3D\nSketch'} />
      <Grid names={['refPlane', 'copySketch', 'editPart']} />
    </Group>
    <Group name="Assemble" w={293} pad={6}>
      <Big n="insert" w={54} label={'Insert\nComponent'} />
      <Big n="create" w={52} label={'Create Part\nIn-Place'} caret />
      <Big n="assembleBig" w={44} label="Assemble" />
      <InnerSep $r={3} />
      <Grid names={['flash', 'mate', 'planar', 'axial', 'insertRel', 'connect', 'angle', 'tangent', 'path']} />
      <CaretColumn $at={3}><Caret label="Relationship options" /></CaretColumn>
      <Grid names={['parallel', 'gears', 'coord', 'center', 'rigid', 'ground']} />
      <InnerSep $l={1} />
      <Grid names={['toggle', 'mateSoft', 'capsule']} />
    </Group>
    <Group name="Modify" w={172} pad={5}>
      <Big n="moveSelect" w={42} label={'Move on\nSelect'} on />
      <Big n="drag" w={62} label={'Drag\nComponent'} caret />
      <Big n="replace" w={40} label={'Replace\nPart'} caret />
      <Grid names={['moveGrey', 'replaceGrey']} />
    </Group>
    <Group name="Motors" w={52} pad={4}>
      <Grid names={['motorRot', 'motorLin', 'motorVar']} />
      <InnerSep />
      <Grid names={['motorSim']} />
    </Group>
    <Group name="Face Relate" w={67} pad={7}>
      <Grid w={18} names={['concentricSq', 'parallelSoft', 'perpend', 'concentric', 'offset', 'tangentSoft', 'symmetric', 'equal', 'mirrorSoft']} />
    </Group>
    <Group name="Pattern" w={47} pad={5}>
      <Grid names={['rectPattern', 'mirror', 'duplicate', 'curvePattern', 'clonePart']} />
    </Group>
    <Group name="Configurations" w={143} pad={5}>
      <ConfigBody>
        <ConfigRow $top={6}>
          <Picker $w={115} $h={19} $line="#b4b4b4">
            <select aria-label="Configuration" defaultValue=""><option value="" /></select>
            <CaretShape />
          </Picker>
          <Tool n="cfgApply" w={19} />
        </ConfigRow>
        <ConfigRow $top={8}>
          {['cfgPart', 'cfgList', 'cfgDoc', 'cfgSave', 'camera', 'cameraGrey', 'dashed'].map((n) => <Tool key={n} n={n} w={19} />)}
        </ConfigRow>
      </ConfigBody>
    </Group>
    <Group name="Modes" w={35} pad={8}>
      <Grid names={['gridMode', 'warnArrow', 'warnSave']} />
    </Group>
    <Group name="Orient" w={141} pad={6}>
      <Big n="zoomArea" w={36} label={'Zoom\nArea'} />
      <Big n="fit" w={37} label="Fit" />
      <Grid names={['zoom', 'pan', 'refresh', 'rotateCube', 'orbit', 'paintView', 'prevView', 'cubeArrows', 'treeCursor']} />
    </Group>
    <Group name="Style" w={170} pad={5}>
      <StyleCubes>
        <CubeButton aria-label="Wireframe"><WireCube fill="none" side="none" stroke="#3f82d0" hidden="#3f82d0" inner /></CubeButton>
        <CubeButton $on aria-label="Visible and hidden edges"><WireCube fill="none" side="none" stroke="#6c98d4" hidden="#c4c4c4" inner /></CubeButton>
        <CubeButton aria-label="Visible edges"><WireCube fill="#fff" side="#fff" stroke="#3f82d0" /></CubeButton>
        <CubeButton aria-label="Shaded"><WireCube fill="#ffe08a" side="#f0b02c" stroke="#e8b84c" /></CubeButton>
        <CubeButton aria-label="Shaded with edges"><WireCube fill="#ffd458" side="#e8a01c" stroke="#2f6aa8" /></CubeButton>
      </StyleCubes>
      <InnerSep $l={2} $r={3} />
      <StyleSide>
        <StylesButton>
          <svg width={15} height={16} viewBox="0 0 15 16" aria-hidden="true">
            <path d="M1 8l3-7 2 7M2 5.500h3" fill="none" stroke="#2a3f6c" strokeWidth={1.3} />
            <path d="M4 15L11 4l1.500 11M7 11h5M3 15h3M11 15h4" fill="none" stroke="#2b579a" strokeWidth={1.7} />
          </svg>
          Styles
        </StylesButton>
        <Picker $w={71} $h={19}>
          <select aria-label="View style"><option>Hidden Line</option></select>
          <CaretShape />
        </Picker>
        <Picker $w={71} $h={19}>
          <select aria-label="Style override" disabled><option>(None)</option></select>
          <CaretShape $pale />
        </Picker>
      </StyleSide>
    </Group>
  </Ribbon>
);

/* ---------- favourites bar ---------- */

const ActionBar = styled.nav`
  display: flex; align-items: center; height: 32px; flex: none; border-bottom: 1px solid #c8c8c8; padding-left: 131px;
`;
const PointerArrow = styled.svg`align-self: flex-start; margin-top: 6px;`;
const Action = styled.button<{ $gap: number }>`
  display: flex; align-items: center; gap: 1px; margin-left: ${(p) => p.$gap}px; white-space: nowrap;
`;
const actions: [string, string, number][] = [
  ['ground', 'Ground', 46], ['mate', 'Mate', 20], ['insertPart', 'Insert Component', 24], ['assemble', 'Assemble', 16],
  ['repair', 'Repair Missing Files', 20], ['propManager', 'Properties Manager', 24], ['variables', 'Variables', 20],
  ['geomInspect', 'Geometry Inspector', 16], ['updateStruct', 'Update Structure', 20], ['smartMeasure', 'Smart Measure', 16],
];

/* ---------- left panel ---------- */

const Main = styled.main`display: flex; flex: 1; min-height: 0;`;
const Side = styled.aside`width: 198px; flex: none; display: flex; flex-direction: column;`;
const Divider = styled.div`width: 3px; margin-top: 1px; flex: none; border: solid #c4c4c4; border-width: 0 1px; background: #f4f4f4;`;
const SideTitle = styled(Row)`
  height: 18px; padding: 2px 4px 0 3px; gap: 2px; flex: none;
  h2 { margin: 0; font-size: 10px; font-weight: 400; color: #3c5fa4; flex: 1; }
`;
const SideTabs = styled.div`display: flex; height: 23px; flex: none; box-shadow: inset 0 -1px #c8c8c8;`;
const SideTab = styled.button<{ $on?: boolean }>`
  width: 26px; display: flex; align-items: center; justify-content: center; border-right: 1px solid #c8c8c8; border-top: 2px solid transparent;
  ${(p) => p.$on && css`border-top-color: ${c.mid}; background: #fff;`}
`;
const SideTools = styled.div`display: flex; height: 23px; padding-top: 2px; gap: 1px; flex: none;`;
const SideTool = styled.button<{ $w?: number }>`
  width: ${(p) => p.$w ?? 18}px; height: 20px; background: #dedede; display: flex; align-items: center; justify-content: center; gap: 1px; flex: none;
`;
const FolderPicker = styled.label`
  display: flex; align-items: center; height: 19px; margin: 4px 1px 0 0; padding: 0 4px 0 1px; background: #dfdfdf; flex: none;
  border-bottom: 1px solid #c4c4c4;
  select { appearance: none; border: 0; background: none; flex: 1; color: #222; padding: 0 2px; }
`;
const FolderList = styled.ul`flex: 1; margin: 4px 1px 0 0; border: solid #9a9a9a; border-width: 0 1px 0 0;`;
const FolderItem = styled.button<{ $on?: boolean }>`
  display: flex; align-items: center; height: 15px; color: #111; padding-left: 1px;
  span { background: ${(p) => (p.$on ? '#eeeeee' : 'none')}; padding: 0 1px; line-height: 14px; }
`;
const Preview = styled.div`
  flex: 0 0 175px; margin: 0 1px 1px 0; border: 1px solid #a8a8a8; background: #efefef;
  display: flex; align-items: center; justify-content: center; color: #111;
`;

const LeftPanel = () => (
  <Side>
    <SideTitle>
      <Icon n="partsLib" s={18} /><h2>Parts Library</h2>
      <Tool n="menuBar" s={13} w={13} /><Tool n="pin" s={13} w={13} /><Tool n="close" s={11} w={13} />
    </SideTitle>
    <SideTabs>
      {['images', 'partsGrey', 'partsLib', 'partsCursor', 'helpDoc', 'treeGrey', 'palette'].map((n) => (
        <SideTab key={n} $on={n === 'partsLib'} aria-label={n}><Icon n={n} s={17} /></SideTab>
      ))}
    </SideTabs>
    <SideTools>
      <SideTool $w={16} aria-label="Columns"><Icon n="columns" s={14} /></SideTool>
      <SideTool aria-label="Home"><Icon n="home" /></SideTool>
      <Space $w={18} />
      <SideTool aria-label="Back"><Icon n="back" /></SideTool>
      <SideTool aria-label="Forward"><Icon n="forward" /></SideTool>
      <SideTool aria-label="Up"><Icon n="upFolder" /></SideTool>
      <SideTool aria-label="New folder"><Icon n="newFolder" /></SideTool>
      <SideTool $w={26} aria-label="View"><Icon n="viewGrid" /><CaretShape /></SideTool>
      <SideTool aria-label="Hardware"><Icon n="bolt" /></SideTool>
      <SideTool aria-label="Search"><Icon n="search" /></SideTool>
    </SideTools>
    <FolderPicker>
      <Icon n="desktop" s={14} />
      <select aria-label="Folder"><option>Desktop</option></select>
      <svg width={6} height={4} viewBox="0 0 6 4" aria-hidden="true"><path d="M0.500 0.500L3 3 5.500 0.500" fill="none" stroke="#777" /></svg>
    </FolderPicker>
    <FolderList>
      {[['oneDrive', 'OneDrive'], ['thisPc', 'This PC'], ['libraries', 'Libraries'], ['user', 'Kite, Tamra (DI SW ME PRD SDE PP)'], ['network', 'Network']].map(([n, t], i) => (
        <li key={t}><FolderItem $on={i === 0}><Icon n={n} s={13} /><span>{t}</span></FolderItem></li>
      ))}
    </FolderList>
    <Preview>Preview Not Available</Preview>
  </Side>
);

/* ---------- document area ---------- */

const DocArea = styled.section`flex: 1; min-width: 0; display: flex; flex-direction: column;`;
const DocTabs = styled.div`
  height: 23px; padding-top: 2px; display: flex; justify-content: space-between; align-items: stretch; flex: none; border-bottom: 1px solid ${c.edge};
`;
const DocTab = styled.div`
  width: 163px; display: flex; align-items: center; gap: 2px; padding: 0 1px 0 8px; margin-left: 1px;
  border: solid ${c.edge}; border-width: 2px 1px 0; border-top-color: ${c.blue}; font-size: 10px; color: #3c5fa4;
  span { flex: 1; }
`;
const Canvas = styled.div`
  position: relative; flex: 1; background: #fafcfc; display: flex; flex-direction: column; align-items: flex-start;
`;
const SplitBar = styled.div`
  width: 219px; height: 8px; background: linear-gradient(#e8e8e8, #c4c4c4); border: 1px solid #9c9c9c; border-top: 0;
  display: flex; align-items: center; justify-content: center;
  &::before { content: ''; width: 20px; border-top: 1px dotted #5c7cac; }
`;
const Tree = styled.ul`margin: 3px 0 auto 3px; color: #111;`;
const TreeRow = styled.li<{ $in?: boolean }>`
  display: flex; align-items: center; height: 14px; gap: 3px; padding-left: ${(p) => (p.$in ? 12 : 0)}px;
`;
const Twist = styled.span`width: 10px; display: flex; button { display: flex; }`;
const Check = styled.input`
  appearance: none; margin: 0; width: 12px; height: 12px; border: 1px solid #34506c; background: #fff; display: grid; place-items: center;
  &:checked::before { content: ''; width: 8px; height: 7px; background: #222; clip-path: polygon(0 40%, 38% 68%, 100% 0, 100% 28%, 38% 100%, 0 72%); }
`;
const NodeLabel = styled.label<{ $dim?: boolean }>`
  display: flex; align-items: center; height: 13px; padding-right: 1px; gap: 1px;
  background: linear-gradient(#fdfefe, #e9f0f2); border: solid #c0ccd2; border-width: 0 1px 1px 0; color: ${(p) => (p.$dim ? '#888' : '#111')};
`;
const Model = styled.svg`position: absolute; left: calc(47% - 2px); top: 39%;`;
const ViewCube = styled.svg`position: absolute; right: 23px; bottom: 20px;`;
const CornerButton = styled.button`position: absolute; right: 7px; top: 4px; width: 20px; height: 24px;`;
const Message = styled.div`
  margin: 0 0 46px 2px;
  &::before { content: ''; display: block; width: 10px; height: 4px; background: #f9a64a; }
  p { margin: 0; height: 14px; line-height: 12px; padding: 0 2px 0 13px; border: 1px solid #b4c2c8; background: linear-gradient(#f6fafa, #e2eaec); color: #111; }
`;

const TreeNode = ({ id, label, ic, twist, on, dim }: { id: string; label: string; ic: string[]; twist?: boolean; on?: boolean; dim?: boolean }) => (
  <TreeRow $in>
    <Twist>{twist && <button aria-label={`Expand ${label}`}><Icon n="expand" s={10} /></button>}</Twist>
    <Check type="checkbox" id={id} defaultChecked={on} />
    <NodeLabel htmlFor={id} $dim={dim}>{ic.map((n) => <Icon key={n} n={n} s={ic.length > 1 || n === 'part' ? 13 : 14} />)}{label}</NodeLabel>
  </TreeRow>
);

const Document = () => (
  <DocArea>
    <DocTabs>
      <DocTab><Icon n="docTab" s={14} /><span>blockAB.asm[Read-Only]</span><Tool n="closeBlue" s={9} w={11} /></DocTab>
      <Row><Tool n="triLeft" s={12} w={13} /><Tool n="triRight" s={12} w={13} /><Tool n="triDown" s={9} w={12} /><Tool n="close" s={11} w={13} /></Row>
    </DocTabs>
    <Canvas>
      <SplitBar />
      <Tree>
        <TreeRow><NodeLabel as="span"><Icon n="asmRoot" s={13} /><Space $w={1} /><Icon n="lock" s={13} />blockAB.asm</NodeLabel></TreeRow>
        <TreeNode id="n1" label="Coordinate Systems" ic={['triad']} twist on />
        <TreeNode id="n2" label="Reference Planes" ic={['plane']} twist dim />
        <TreeNode id="n3" label="BlockB.par:1" ic={['partGround', 'lock']} on />
        <TreeNode id="n4" label="BlockA.par:1" ic={['part', 'lock']} on />
      </Tree>
      <Message><p>No top level part selected.</p></Message>
      <Model width={52} height={86} viewBox="0 0 52 86" role="img" aria-label="Stacked blocks A and B">
        <g fill="none" stroke="#c9cdd0">
          <path d="M26 1v56M2 43l24-14 24 14M2 71l24-14 24 14" />
        </g>
        <g fill="none" stroke="#5aa4ea">
          <path d="M26 1L2 15l24 14 24-14zM2 15v56l24 13 24-13V15M26 29v55M2 43l24 13 24-13" />
        </g>
        <g fill="#3f8fe6" fontSize={26} fontWeight={300} fontFamily="Lato, sans-serif">
          <text x={6} y={45}>A</text>
          <text x={7} y={74}>B</text>
        </g>
      </Model>
      <ViewCube width={66} height={72} viewBox="0 0 66 72" role="img" aria-label="View cube">
        <g stroke="#b8b8b8" strokeLinejoin="round">
          <path d="M1 16L33 1l32 15-32 18z" fill="#fdfdfd" />
          <path d="M1 16l32 18v37L4 52z" fill="#fbfbfb" />
          <path d="M65 16L33 34v37l29-19z" fill="#ebeeee" />
        </g>
        <g fontSize={9} fill="#4a4a4a" fontFamily="Open Sans, sans-serif">
          <text transform="translate(25 16) rotate(24)">TOP</text>
          <text transform="translate(5 41) rotate(29)">FRONT</text>
          <text transform="translate(40 54) rotate(-29)">RIGHT</text>
        </g>
        <path d="M33 34V18" stroke="#6c6cf0" />
        <path d="M33 34l14-8" stroke="#4cc04c" />
        <path d="M33 34l15 8" stroke="#f05050" />
        <circle cx={33} cy={34} r={2} fill="#e0d020" />
      </ViewCube>
      <CornerButton aria-label="Sketch view">
        <svg width={20} height={24} viewBox="0 0 20 24" aria-hidden="true">
          <path d="M1.500 1.500h12l5 5v16h-17z" fill="#f2f6fd" stroke="#6c94d4" />
          <circle cx={8} cy={7} r={4} fill="none" stroke="#e02a2c" strokeWidth={1.5} />
          <path d="M5.500 4.500l5 5" stroke="#e02a2c" strokeWidth={1.3} />
          <Pencil x={7} y={19} l={11} />
          <path d="M4 20c3 2 6-1 9 1" fill="none" stroke="#2f57c0" />
        </svg>
      </CornerButton>
    </Canvas>
    <PromptBar />
  </DocArea>
);

const PromptRow = styled(Row)`
  height: 22px; flex: none; border-top: 2px solid #d4d4d4; padding: 0 0 0 4px;
  strong { font-weight: 400; font-size: 10px; color: #4a6ab4; margin-left: 4px; width: 59px; }
  p { margin: 0; font-family: 'Noto Sans', 'Open Sans', sans-serif; font-size: 11px; line-height: 16px; color: #111; flex: 1; white-space: nowrap; overflow: hidden; }
`;
const FontButton = styled.button<{ $s: number }>`
  font: 700 ${(p) => p.$s}px/14px 'Liberation Serif', serif; color: #111; width: 14px;
`;

const PromptBar = () => (
  <PromptRow>
    <Icon n="promptBar" s={18} /><strong>PromptBar</strong>
    <p>Select components to edit or click the Insert Component command, Create Part In-Place command, Parts Library tab or drag components from Windows Explorer.</p>
    <FontButton $s={15} aria-label="Larger text">A</FontButton>
    <FontButton $s={11} aria-label="Smaller text">A</FontButton>
    <Tool n="chevUp" s={11} w={14} /><Tool n="menuBar" s={13} w={14} /><Tool n="pin" s={13} w={14} /><Tool n="close" s={11} w={14} />
  </PromptRow>
);

/* ---------- status bar ---------- */

const Status = styled.footer`
  display: flex; align-items: center; justify-content: flex-end; height: 19px; flex: none; background: ${c.blue}; border-bottom: 1px solid #7f9ccc; color: #fff;
  margin: 0 -1px;
`;
const Count = styled.span`font-size: 10px; color: #fff; margin-right: 34px;`;
const Finder = styled.input<{ $w: number }>`
  width: ${(p) => p.$w}px; height: 16px; border: 0; border-radius: 0; padding: 0 3px; margin-right: 2px; background: #fff; outline: 0; font-size: 10px;
  &::placeholder { color: #b4b4b4; opacity: 1; }
`;
const Zoom = styled.input`
  appearance: none; width: 102px; height: 14px; margin: 0; background: linear-gradient(#b4c8e4, #b4c8e4) center / 100% 1px no-repeat;
  &::-webkit-slider-thumb { appearance: none; width: 9px; height: 12px; background: #e4ebf4; border: 1px solid #90a8cc; clip-path: polygon(0 0, 100% 0, 100% 65%, 50% 100%, 0 65%); }
`;

export default function App() {
  return (
    <>
      <Global />
      <Shell>
        <AppHeader />
        <RibbonBar />
        <ActionBar>
          <PointerArrow width={58} height={12} viewBox="0 0 58 12" aria-hidden="true">
            <path d="M0 5h38v2H0z" fill="#8c1a1c" />
            <path d="M38 0l20 6-20 5.500 2-5.500z" fill="#a01c20" />
          </PointerArrow>
          {actions.map(([n, t, g]) => <Action key={t} $gap={g}><Icon n={n} />{t}</Action>)}
        </ActionBar>
        <Main>
          <LeftPanel />
          <Divider />
          <Document />
        </Main>
        <Status>
          <Count>0 items are selected</Count>
          <Finder $w={132} aria-label="Component Search" placeholder="Component Search" />
          <Finder $w={123} aria-label="Find a command" placeholder="Find a command" />
          {['share', 'sZoomArea', 'zoom', 'sFit', 'pan', 'sSpin', 'sLook', 'sYellow', 'sStyle', 'treeCursor'].map((n) => <Tool key={n} n={n} w={19} s={14} />)}
          <Tool n="minus" w={17} s={14} />
          <Zoom type="range" aria-label="Zoom" defaultValue={0} />
          <Tool n="plus" w={18} s={14} />
          <Tool n="player" w={19} s={14} />
          <Tool n="record" w={23} s={14} />
          <Tool n="upload" w={21} s={14} /><Tool n="grip" w={16} s={14} />
        </Status>
      </Shell>
    </>
  );
}
